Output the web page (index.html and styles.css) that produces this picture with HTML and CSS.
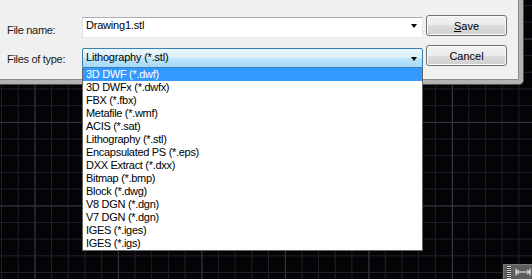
FILE: index.html
```html
<!DOCTYPE html>
<html lang="en">

<head>
    <meta charset="UTF-8">
    <meta name="viewport" content="width=device-width, initial-scale=1.0">
    <title>Save Drawing As</title>
    <link rel="stylesheet" href="styles.css">
</head>

<body>
    <div class="frame">
        <div class="dialog">
            <div class="row row-name">
                <label class="field-label" for="fileName">File name:</label>
                <div class="combo combo-name" id="fileName">
                    <span class="combo-text">Drawing1.stl</span>
                    <span class="arrow"></span>
                </div>
                <button class="btn" type="button"><u>S</u>ave</button>
            </div>

            <div class="row row-type">
                <label class="field-label" for="fileType">Files of type:</label>
                <div class="combo combo-type" id="fileType">
                    <span class="combo-text">Lithography (*.stl)</span>
                    <span class="arrow"></span>

                    <!-- open list -->
                    <ul class="dropdown">
                        <li class="selected">3D DWF (*.dwf)</li>
                        <li>3D DWFx (*.dwfx)</li>
                        <li>FBX (*.fbx)</li>
                        <li>Metafile (*.wmf)</li>
                        <li>ACIS (*.sat)</li>
                        <li>Lithography (*.stl)</li>
                        <li>Encapsulated PS (*.eps)</li>
                        <li>DXX Extract (*.dxx)</li>
                        <li>Bitmap (*.bmp)</li>
                        <li>Block (*.dwg)</li>
                        <li>V8 DGN (*.dgn)</li>
                        <li>V7 DGN (*.dgn)</li>
                        <li>IGES (*.iges)</li>
                        <li>IGES (*.igs)</li>
                    </ul>
                </div>
                <button class="btn" type="button">Cancel</button>
            </div>
        </div>
    </div>

    <div class="status">
        <span class="grip"></span>
        <svg class="measure" width="16" height="8" viewBox="0 0 16 8">
            <path d="M1 0.5V7.5M15 0.5V7.5M1 4H15M1 4L4 2M1 4L4 6M15 4L12 2M15 4L12 6" stroke="#f2f2f2" stroke-width="1"
                fill="none" />
        </svg>
    </div>
</body>

</html>
```

FILE: styles.css
```css
/* drawing canvas */
html,
body {
    margin: 0;
    width: 532px;
    height: 279px;
    overflow: hidden;
}

body {
    position: relative;
    background-color: #040406;
    background-image:
        linear-gradient(to right, #34343e 1px, transparent 1px),
        linear-gradient(to bottom, #34343e 1px, transparent 1px),
        linear-gradient(to right, #1f1f27 1px, transparent 1px),
        linear-gradient(to bottom, #1f1f27 1px, transparent 1px);
    background-size: 83.5px 83.5px, 83.5px 83.5px, 16.7px 16.7px, 16.7px 16.7px;
    background-position: 34.5px 38.5px, 34.5px 38.5px, 1px 5px, 1px 5px;
    font-family: "Liberation Sans", Arial, sans-serif;
    font-size: 11px;
    color: #000;
}

/* dialog window */
.frame {
    width: 524px;
    padding: 0 4px 4px 0;
    box-sizing: border-box;
    background: #b4b4b4;
    border-right: 1px solid #505050;
    border-bottom: 1px solid #505050;
    border-bottom-right-radius: 5px;
}

.dialog {
    width: 519px;
    height: 80px;
    box-sizing: border-box;
    padding-left: 7px;
    background: #f0f0f0;
    border-right: 1px solid #8a8a8a;
    border-bottom: 1px solid #8a8a8a;
    border-bottom-right-radius: 2px;
}

.row {
    display: flex;
    align-items: flex-start;
}

.row-name {
    padding-top: 15px;
}

.row-type {
    padding-top: 7px;
}

.field-label {
    width: 75px;
    line-height: 14px;
    letter-spacing: -0.3px;
    color: #1a1a1a;
}

.row-name .field-label {
    margin-top: 8px;
}

.row-type .field-label {
    margin-top: 7px;
}

/* combo boxes */
.combo {
    position: relative;
    width: 341px;
    box-sizing: border-box;
    padding-left: 3px;
    line-height: 15px;
    display: flex;
    letter-spacing: -0.2px;
}

.combo-text {
    flex: 1;
}

.combo-name {
    height: 21px;
    margin-top: 2px;
    background: #fff;
    border: 1px solid #abadb3;
    border-color: #abadb3 #e3e9ef #e3e9ef #e2e3ea;
}

.combo-type {
    height: 20px;
    margin-top: 3px;
    padding-top: 1px;
    border: 1px solid #3c7fb1;
    border-radius: 2px 2px 0 0;
    background: linear-gradient(#eaf6fd 0%, #d9f0fc 50%, #bee6fd 50%, #a7d9f5 100%);
}

.arrow {
    width: 0;
    height: 0;
    margin: 6px 5px 0 0;
    border-left: 3px solid transparent;
    border-right: 3px solid transparent;
    border-top: 4px solid #000;
}

.combo-type .arrow {
    margin-top: 7px;
}

/* open list over the canvas */
.dropdown {
    position: absolute;
    top: 19px;
    left: -1px;
    width: 341px;
    box-sizing: border-box;
    margin: 0;
    padding: 0;
    list-style: none;
    background: #fff;
    border: 1px solid #646464;
    border-top: none;
    line-height: 13px;
    letter-spacing: -0.3px;
}

.dropdown li {
    padding-left: 3px;
    height: 13px;
    white-space: nowrap;
}

.dropdown li.selected {
    background: #3399ff;
    color: #fff;
}

/* push buttons */
.btn {
    width: 81px;
    height: 21px;
    margin-left: 3px;
    padding: 0;
    font-family: inherit;
    font-size: 11px;
    color: #000;
    border: 1px solid #707070;
    border-radius: 3px;
    background: linear-gradient(#f2f2f2 0%, #ebebeb 50%, #dddddd 50%, #cfcfcf 100%);
    box-shadow: inset 0 0 0 1px #fbfbfb;
}

.btn u {
    text-decoration: underline;
}

/* status tray, bottom right */
.status {
    position: absolute;
    right: 0;
    bottom: 0;
    width: 29px;
    height: 15px;
    display: flex;
    align-items: center;
    gap: 4px;
    padding-left: 3px;
    box-sizing: border-box;
    background: #5e5e5e;
    border-top: 1px solid #777;
    border-left: 1px solid #777;
}

.grip {
    width: 4px;
    height: 13px;
    background: repeating-linear-gradient(to bottom, #d8d8d8 0 1px, #333 1px 2px);
}

.measure {
    display: block;
}
```
